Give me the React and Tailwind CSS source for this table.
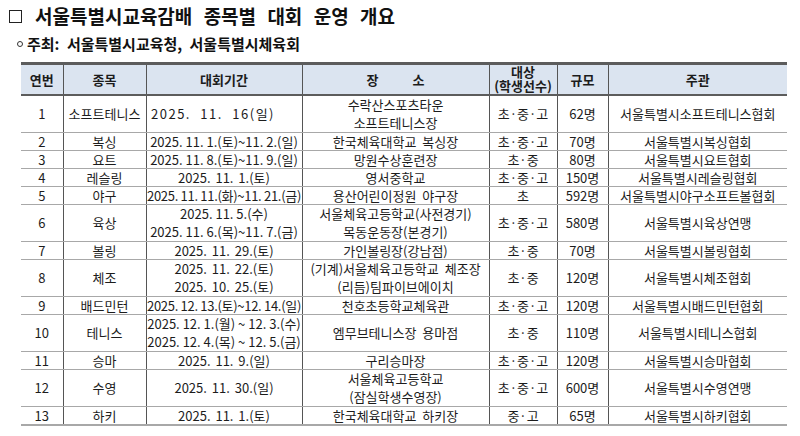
import React from 'react';

const rows = [
  { no: 1, sport: '소프트테니스', dates: ['2025. 11. 16(일)'], place: ['수락산스포츠타운', '소프트테니스장'], target: '초·중·고', size: '62명', host: '서울특별시소프트테니스협회', ws: 'extra' },
  { no: 2, sport: '복싱', dates: ['2025. 11. 1.(토)~11. 2.(일)'], place: ['한국체육대학교 복싱장'], target: '초·중·고', size: '70명', host: '서울특별시복싱협회' },
  { no: 3, sport: '요트', dates: ['2025. 11. 8.(토)~11. 9.(일)'], place: ['망원수상훈련장'], target: '초·중', size: '80명', host: '서울특별시요트협회' },
  { no: 4, sport: '레슬링', dates: ['2025. 11. 1.(토)'], place: ['영서중학교'], target: '초·중·고', size: '150명', host: '서울특별시레슬링협회', ws: 'wide' },
  { no: 5, sport: '야구', dates: ['2025. 11. 11.(화)~11. 21.(금)'], place: ['용산어린이정원 야구장'], target: '초', size: '592명', host: '서울특별시야구소프트볼협회', ws: 'tight' },
  { no: 6, sport: '육상', dates: ['2025. 11. 5.(수)', '2025. 11. 6.(목)~11. 7.(금)'], place: ['서울체육고등학교(사전경기)', '목동운동장(본경기)'], target: '초·중·고', size: '580명', host: '서울특별시육상연맹' },
  { no: 7, sport: '볼링', dates: ['2025. 11. 29.(토)'], place: ['가인볼링장(강남점)'], target: '초·중', size: '70명', host: '서울특별시볼링협회', ws: 'wide' },
  { no: 8, sport: '체조', dates: ['2025. 11. 22.(토)', '2025. 10. 25.(토)'], place: ['(기계)서울체육고등학교 체조장', '(리듬)팀파이브에이치'], target: '초·중', size: '120명', host: '서울특별시체조협회', ws: 'wide' },
  { no: 9, sport: '배드민턴', dates: ['2025. 12. 13.(토)~12. 14.(일)'], place: ['천호초등학교체육관'], target: '초·중·고', size: '120명', host: '서울특별시배드민턴협회', ws: 'tight' },
  { no: 10, sport: '테니스', dates: ['2025. 12. 1.(월) ~ 12. 3.(수)', '2025. 12. 4.(목) ~ 12. 5.(금)'], place: ['엠무브테니스장 용마점'], target: '초·중', size: '110명', host: '서울특별시테니스협회' },
  { no: 11, sport: '승마', dates: ['2025. 11. 9.(일)'], place: ['구리승마장'], target: '초·중·고', size: '120명', host: '서울특별시승마협회', ws: 'wide' },
  { no: 12, sport: '수영', dates: ['2025. 11. 30.(일)'], place: ['서울체육고등학교', '(잠실학생수영장)'], target: '초·중·고', size: '600명', host: '서울특별시수영연맹', ws: 'wide' },
  { no: 13, sport: '하키', dates: ['2025. 11. 1.(토)'], place: ['한국체육대학교 하키장'], target: '중·고', size: '65명', host: '서울특별시하키협회', ws: 'wide' },
];

const dateSpacing = {
  extra: 'tracking-[1.5px] [word-spacing:5px] pr-[22px]',
  wide: '[word-spacing:2px]',
  tight: 'tracking-[-0.3px]',
};

const Lines = ({ items }) => (
  <>
    {items.map((t, i) => (
      <div key={i}>{t}</div>
    ))}
  </>
);

const App = () => {
  const th = 'border-t-[3px] border-b-2 border-t-[#5c5c5c] border-b-[#5c5c5c] bg-[#dbe4f0] font-bold text-[13px] text-[#1c1c1c] p-0 align-middle';
  const td = 'border-b border-b-[#a8a8a8] p-0 text-center align-middle text-[13px] text-[#1c1c1c] whitespace-nowrap';
  const vl = 'border-l border-l-[#555]';

  return (
    <div className="w-[800px] h-[436px] bg-white overflow-hidden" style={{ fontFamily: '"Noto Sans CJK KR", "Noto Sans", sans-serif' }}>
      {/* title */}
      <div className="flex items-center h-[24px] mt-[4px] pl-[9px] text-[19px] font-bold text-[#111] [word-spacing:7px]">
        <span className="inline-block w-[13px] h-[13px] border-[1.5px] border-[#222] mr-[13px]"></span>
        <span>서울특별시교육감배 종목별 대회 운영 개요</span>
      </div>

      {/* host */}
      <div className="flex items-center h-[20px] mt-[6px] pl-[17px] text-[15px] font-bold text-[#111] [word-spacing:4px]">
        <span className="inline-block w-[6px] h-[6px] rounded-full border border-[#333] mr-[4px]"></span>
        <span>주최: 서울특별시교육청, 서울특별시체육회</span>
      </div>

      {/* table */}
      <div className="pl-[21px] mt-[8px]">
        <table className="w-[766px] table-fixed border-collapse">
          <colgroup>
            <col className="w-[42px]" />
            <col className="w-[83px]" />
            <col className="w-[156px]" />
            <col className="w-[187px]" />
            <col className="w-[68px]" />
            <col className="w-[51px]" />
            <col className="w-[179px]" />
          </colgroup>
          <thead>
            <tr className="h-[31px]">
              <th className={th}>연번</th>
              <th className={`${th} ${vl}`}>종목</th>
              <th className={`${th} ${vl}`}>대회기간</th>
              <th className={`${th} ${vl}`}>
                <div className="flex justify-center gap-[34px]">
                  <span>장</span>
                  <span>소</span>
                </div>
              </th>
              <th className={`${th} ${vl} leading-[14px]`}>
                <div>대상</div>
                <div>(학생선수)</div>
              </th>
              <th className={`${th} ${vl}`}>규모</th>
              <th className={`${th} ${vl}`}>주관</th>
            </tr>
          </thead>
          <tbody>
            {rows.map((r, i) => {
              const double = r.dates.length > 1 || r.place.length > 1;
              const last = i === rows.length - 1;
              const base = `${td} ${double ? 'leading-[18px]' : 'leading-[17px]'}`;
              const rowTd = last ? `${base} border-b-2 border-b-[#222]` : base;
              return (
                <tr key={r.no} className={double ? 'h-[37px]' : 'h-[18px]'}>
                  <td className={rowTd}>{r.no}</td>
                  <td className={`${rowTd} ${vl}`}>{r.sport}</td>
                  <td className={`${rowTd} ${vl} ${r.ws ? dateSpacing[r.ws] : ''}`}>
                    <Lines items={r.dates} />
                  </td>
                  <td className={`${rowTd} ${vl} [word-spacing:3px]`}>
                    <Lines items={r.place} />
                  </td>
                  <td className={`${rowTd} ${vl}`}>{r.target}</td>
                  <td className={`${rowTd} ${vl}`}>{r.size}</td>
                  <td className={`${rowTd} ${vl}`}>{r.host}</td>
                </tr>
              );
            })}
          </tbody>
        </table>
      </div>
    </div>
  );
};

export default App;
